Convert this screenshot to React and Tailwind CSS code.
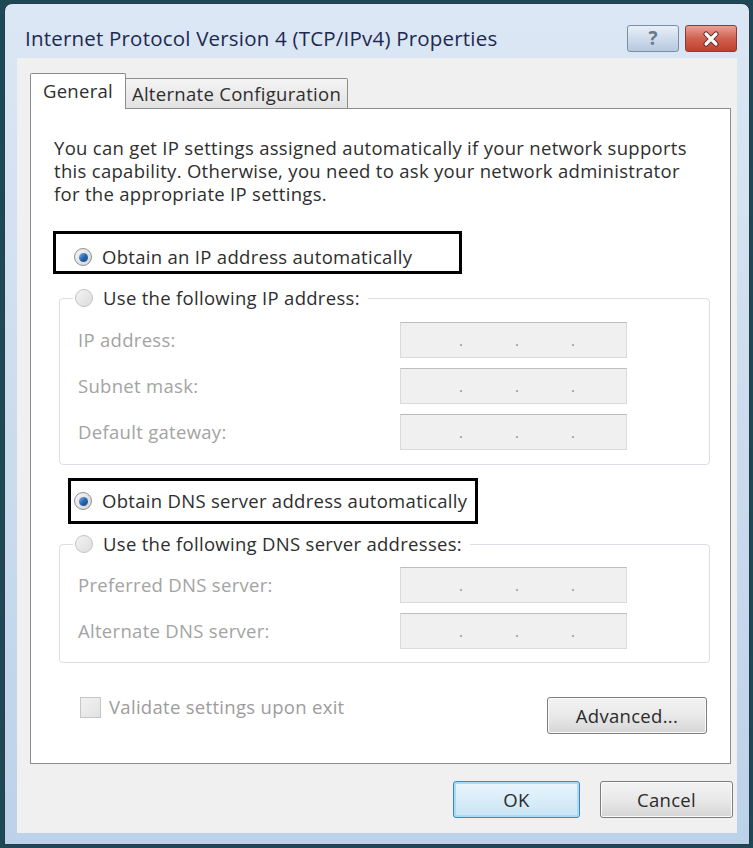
import React from 'react';

const font = { fontFamily: '"Open Sans", "Noto Sans", "DejaVu Sans", sans-serif' };

const Radio = ({ checked, disabled }) => (
  <span
    className={`relative inline-flex items-center justify-center w-[18px] h-[18px] rounded-full border shrink-0 ${
      disabled
        ? 'border-[#c4c4c4] bg-gradient-to-br from-[#f4f4f4] to-[#dcdcdc]'
        : 'border-[#8e8f8f] bg-gradient-to-br from-[#f6f6f6] to-[#d5d5d5]'
    }`}
  >
    {checked && (
      <span className="w-[9px] h-[9px] rounded-full bg-gradient-to-br from-[#7fb3e6] via-[#2667b5] to-[#154a8a]" />
    )}
  </span>
);

const IpBox = () => (
  <div className="w-[227px] h-[36px] bg-[#f0f0f0] border border-[#dadada] border-t-[#bdbdbd] flex items-center text-[#8f8f8f] text-[15px] leading-none tracking-normal">
    <span className="ml-[58px]">.</span>
    <span className="ml-[52px]">.</span>
    <span className="ml-[52px]">.</span>
  </div>
);

const FieldRow = ({ label }) => (
  <div className="flex items-center h-[36px]">
    <span className="w-[322px] text-[#a3a3a3]">{label}</span>
    <IpBox />
  </div>
);

const WinButton = ({ children, className = '', focused }) => (
  <button
    className={`rounded-[3px] border text-[#2b2b2b] ${
      focused
        ? 'border-[#3d85b8] shadow-[inset_0_0_0_2px_#a9dbf6] bg-gradient-to-b from-[#eaf6fd] to-[#c9e4f4]'
        : 'border-[#7d7d7d] shadow-[inset_0_0_0_1px_#fbfbfb] bg-gradient-to-b from-[#f3f3f3] via-[#e9e9e9] to-[#d6d6d6]'
    } ${className}`}
  >
    {children}
  </button>
);

export default function App() {
  return (
    <div className="w-[753px] h-[848px] bg-[#1f4857] pt-[3px] pb-[3px] pl-[4px] pr-[3px]" style={font}>
      <div className="h-full rounded-t-[8px] border border-[#2a3a48] bg-gradient-to-b from-[#dbe7f4] via-[#ccdcee] to-[#bcd2ea] flex flex-col px-[12px] pb-[11px]">
        {/* Title bar */}
        <div className="h-[54px] flex items-start justify-between pt-[21px]">
          <div className="pl-[8px] h-[27px] flex items-center text-[20.5px] text-[#1f2950] tracking-[0.2px]">
            Internet Protocol Version 4 (TCP/IPv4) Properties
          </div>
          <div className="flex gap-[6px]">
            <div className="w-[52px] h-[27px] rounded-[3px] border border-[#7c8ea5] bg-gradient-to-b from-[#e8eff8] via-[#cfdcec] to-[#b7c9df] flex items-center justify-center text-[#6a788a] text-[19px] font-bold leading-none">
              ?
            </div>
            <div className="w-[52px] h-[27px] rounded-[3px] border border-[#8d3b32] bg-gradient-to-b from-[#e6a196] via-[#d0604f] to-[#c0402f] flex items-center justify-center">
              <svg width="18" height="16" viewBox="0 0 18 16">
                <path d="M4 3 L14 13 M14 3 L4 13" stroke="#5a2018" strokeWidth="5" strokeLinecap="round" />
                <path d="M4 3 L14 13 M14 3 L4 13" stroke="#ffffff" strokeWidth="3.2" strokeLinecap="round" />
              </svg>
            </div>
          </div>
        </div>

        {/* Client area */}
        <div className="flex-1 bg-[#f0f0f0] pl-[13px] pt-[15px] text-[18.5px] tracking-[0.3px] text-[#2e2e2e]">
          {/* Tabs */}
          <div className="relative z-10 flex items-end h-[36px] -mb-[1px]">
            <div className="w-[96px] h-[36px] bg-white border border-b-0 border-[#8c8c8c] rounded-t-[2px] flex items-center justify-center pb-[2px]">
              General
            </div>
            <div className="w-[222px] h-[31px] bg-gradient-to-b from-[#f4f4f4] to-[#e2e2e2] border border-l-0 border-[#8c8c8c] rounded-tr-[2px] flex items-center justify-center">
              Alternate Configuration
            </div>
          </div>

          {/* Panel */}
          <div className="relative w-[701px] h-[656px] bg-white border border-[#8c8c8c]">
            <p className="pl-[23px] pt-[27px] leading-[23px]">
              You can get IP settings assigned automatically if your network supports
              <br />
              this capability. Otherwise, you need to ask your network administrator
              <br />
              for the appropriate IP settings.
            </p>

            <div className="mt-[40px] ml-[43px] h-[24px] flex items-center gap-[10px]">
              <Radio checked />
              <span>Obtain an IP address automatically</span>
            </div>

            <fieldset className="mt-[17px] ml-[28px] w-[651px] border border-[#d9dfe4] rounded-[4px] pl-[13px] pt-[12px] pb-[14px]">
              <legend className="pl-[2px] pr-[8px] h-[24px] flex items-center gap-[10px]">
                <Radio disabled />
                <span>Use the following IP address:</span>
              </legend>
              <div className="pl-[5px] flex flex-col gap-[10px]">
                <FieldRow label="IP address:" />
                <FieldRow label="Subnet mask:" />
                <FieldRow label="Default gateway:" />
              </div>
            </fieldset>

            <div className="mt-[24px] ml-[43px] h-[24px] flex items-center gap-[10px]">
              <Radio checked />
              <span>Obtain DNS server address automatically</span>
            </div>

            <fieldset className="mt-[19px] ml-[28px] w-[651px] border border-[#d9dfe4] rounded-[4px] pl-[13px] pt-[11px] pb-[13px]">
              <legend className="pl-[2px] pr-[8px] h-[24px] flex items-center gap-[10px]">
                <Radio disabled />
                <span>Use the following DNS server addresses:</span>
              </legend>
              <div className="pl-[5px] flex flex-col gap-[10px]">
                <FieldRow label="Preferred DNS server:" />
                <FieldRow label="Alternate DNS server:" />
              </div>
            </fieldset>

            <div className="mt-[32px] pl-[49px] pr-[23px] flex justify-between items-start">
              <div className="flex items-center gap-[8px] h-[24px]">
                <span className="w-[21px] h-[21px] border border-[#c6c6c6] bg-gradient-to-br from-[#f2f2f2] to-[#e2e2e2]" />
                <span className="text-[#9c9c9c]">Validate settings upon exit</span>
              </div>
              <WinButton className="mt-[2px] w-[160px] h-[37px]">Advanced...</WinButton>
            </div>

            {/* Annotation boxes */}
            <div className="absolute left-[22px] top-[122px] w-[409px] h-[43px] border-[3px] border-black" />
            <div className="absolute left-[37px] top-[369px] w-[410px] h-[46px] border-[3px] border-black" />
          </div>

          {/* Dialog buttons */}
          <div className="mt-[17px] flex justify-end gap-[20px] pr-[4px]">
            <WinButton focused className="w-[127px] h-[37px]">OK</WinButton>
            <WinButton className="w-[133px] h-[37px]">Cancel</WinButton>
          </div>
        </div>
      </div>
    </div>
  );
}
